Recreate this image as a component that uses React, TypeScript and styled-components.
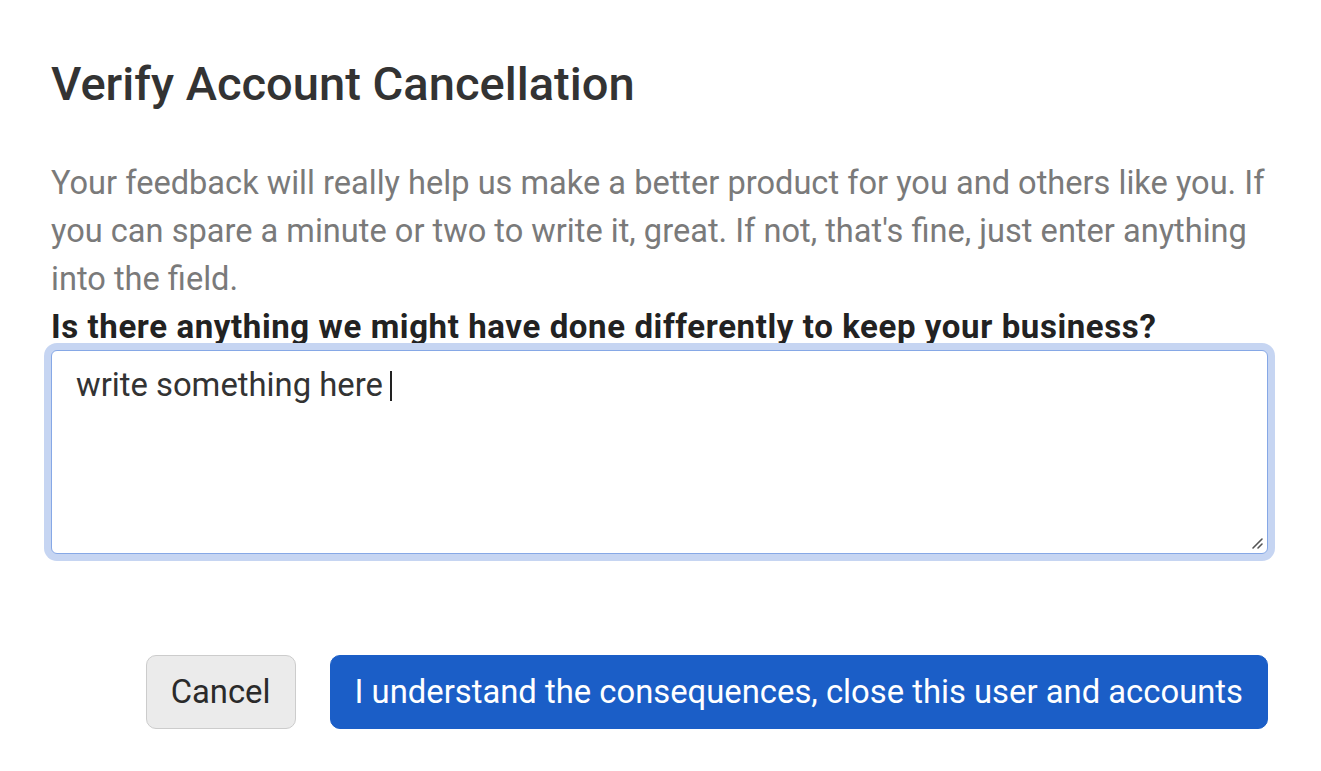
import React from "react";
import styled, { createGlobalStyle } from "styled-components";

const Global = createGlobalStyle`
  html, body { margin: 0; padding: 0; background: #ffffff; }
  body { font-family: Roboto, "Liberation Sans", Arial, sans-serif; }
  * { box-sizing: border-box; }
`;

const Page = styled.div`
  width: 1321px;
  height: 771px;
  padding: 54px 53px 0 51px;
  display: flex;
  flex-direction: column;
`;

const Title = styled.h1`
  margin: 0;
  font-size: 47.1px;
  line-height: 60px;
  font-weight: 500;
  color: #333333;
`;

const Body = styled.div`
  margin-top: 45px;
  display: flex;
  flex-direction: column;
`;

const Intro = styled.p`
  margin: 0 -4px 0 0;
  font-size: 32.6px;
  line-height: 48px;
  color: #7a7a7a;
`;

const Label = styled.label`
  display: block;
  font-size: 33px;
  line-height: 48px;
  font-weight: 700;
  letter-spacing: 0.6px;
  color: #222222;
`;

const Field = styled.div`
  position: relative;
  margin-top: -1px;
  height: 204px;
  border: 1.5px solid #86a8e6;
  border-radius: 6px;
  box-shadow: 0 0 0 7px #c6d5f2;
  padding: 10px 24px;
  font-size: 32.8px;
  line-height: 48px;
  color: #333333;
  background: #ffffff;
`;

const Caret = styled.span`
  display: inline-block;
  width: 2.5px;
  height: 30px;
  margin-left: 7px;
  background: #222222;
  vertical-align: -5px;
`;

const Grip = styled.svg`
  position: absolute;
  right: 3px;
  bottom: 3px;
  width: 16px;
  height: 16px;
`;

const Actions = styled.div`
  margin-top: 101px;
  display: flex;
  justify-content: flex-end;
  gap: 34px;
`;

const Button = styled.button<{ $primary?: boolean }>`
  height: 74px;
  padding: 0 24px;
  border-radius: 10px;
  font-family: Roboto, "Liberation Sans", Arial, sans-serif;
  font-size: 32.8px;
  cursor: pointer;
  border: 1.5px solid ${(p) => (p.$primary ? "#1b5ec7" : "#cccccc")};
  background: ${(p) => (p.$primary ? "#1b5ec7" : "#ebebeb")};
  color: ${(p) => (p.$primary ? "#ffffff" : "#2a2a2a")};
`;

export default function App() {
  return (
    <>
      <Global />
      <Page>
        <Title>Verify Account Cancellation</Title>
        <Body>
          <Intro>
            Your feedback will really help us make a better product for you and others like you. If
            you can spare a minute or two to write it, great. If not, that's fine, just enter anything
            into the field.
          </Intro>
          <Label>Is there anything we might have done differently to keep your business?</Label>
          <Field>
            write something here<Caret />
            <Grip viewBox="0 0 16 16">
              <path d="M14 5 L5 14 M14 10 L10 14" stroke="#555" strokeWidth="1.6" strokeLinecap="round" />
            </Grip>
          </Field>
        </Body>
        <Actions>
          <Button>Cancel</Button>
          <Button $primary>I understand the consequences, close this user and accounts</Button>
        </Actions>
      </Page>
    </>
  );
}
